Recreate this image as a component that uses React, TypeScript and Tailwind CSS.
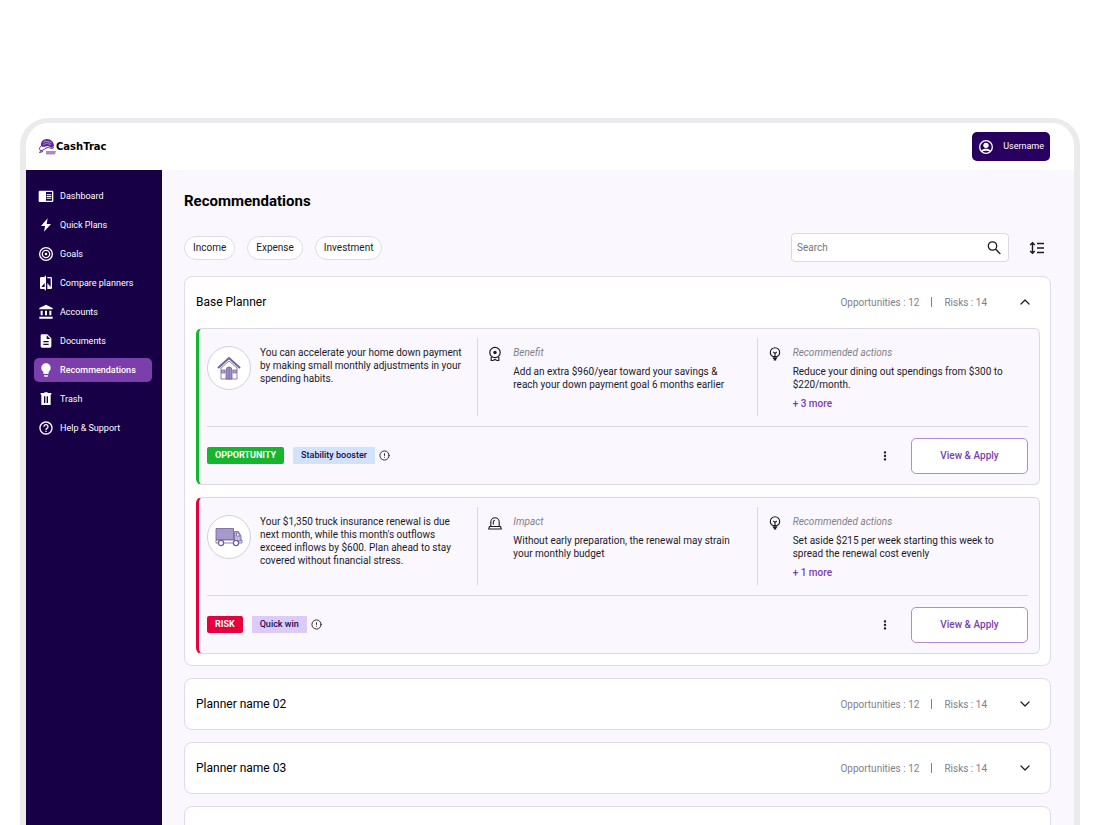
import type { ReactNode } from "react";
import { clsx } from "clsx";
import { ChevronDown, ChevronUp, CircleAlert } from "lucide-react";
import {
  MdAccountBalance,
  MdChromeReaderMode,
  MdCompare,
  MdDescription,
  MdHelpOutline,
  MdLightbulb,
  MdMoreVert,
} from "react-icons/md";

const navItems: { label: string; icon: ReactNode; active?: boolean }[] = [
  { label: "Dashboard", icon: <MdChromeReaderMode /> },
  { label: "Quick Plans", icon: <BoltIcon /> },
  { label: "Goals", icon: <TargetIcon /> },
  { label: "Compare planners", icon: <MdCompare /> },
  { label: "Accounts", icon: <MdAccountBalance /> },
  { label: "Documents", icon: <MdDescription /> },
  { label: "Recommendations", icon: <MdLightbulb />, active: true },
  { label: "Trash", icon: <TrashIcon /> },
  { label: "Help & Support", icon: <MdHelpOutline /> },
];

const filters = ["Income", "Expense", "Investment"];

interface Recommendation {
  kind: "opportunity" | "risk";
  picture: ReactNode;
  summary: string;
  effectIcon: ReactNode;
  effectTitle: string;
  effect: string;
  action: string;
  more: string;
  tag: string;
}

const recommendations: Recommendation[] = [
  {
    kind: "opportunity",
    picture: <HouseIcon />,
    summary:
      "You can accelerate your home down payment by making small monthly adjustments in your spending habits.",
    effectIcon: <AwardIcon />,
    effectTitle: "Benefit",
    effect:
      "Add an extra $960/year toward your savings & reach your down payment goal 6 months earlier",
    action: "Reduce your dining out spendings from $300 to $220/month.",
    more: "+ 3 more",
    tag: "Stability booster",
  },
  {
    kind: "risk",
    picture: <TruckIcon />,
    summary:
      "Your $1,350 truck insurance renewal is due next month, while this month's outflows exceed inflows by $600. Plan ahead to stay covered without financial stress.",
    effectIcon: <SirenIcon />,
    effectTitle: "Impact",
    effect:
      "Without early preparation, the renewal may strain your monthly budget",
    action:
      "Set aside $215 per week starting this week to spread the renewal cost evenly",
    more: "+ 1 more",
    tag: "Quick win",
  },
];

export default function App() {
  return (
    <div className="flex h-screen flex-col bg-white px-5 pt-[118px] font-['Roboto','Liberation_Sans',sans-serif] text-[10px] leading-[13px] text-[#1c1b1f] slashed-zero">
      <div className="flex min-h-0 flex-1 flex-col overflow-hidden rounded-t-[28px] border-x-[6px] border-t-[5px] border-[#ebeaed] bg-[#faf7ff]">
        <Header />
        <div className="flex min-h-0 flex-1">
          <Sidebar />
          <main className="min-w-0 flex-1 overflow-y-auto pr-[23px] pb-6 pl-[22px] [scrollbar-width:none]">
            <h1 className="mt-5 text-[15px] leading-[22px] font-bold text-black">
              Recommendations
            </h1>
            <Toolbar />
            <div className="mt-[14px] flex flex-col gap-3">
              <Planner name="Base Planner" open>
                {recommendations.map((rec) => (
                  <RecommendationCard key={rec.kind} rec={rec} />
                ))}
              </Planner>
              <Planner name="Planner name 02" />
              <Planner name="Planner name 03" />
              <Planner name="Planner name 04" />
            </div>
          </main>
        </div>
      </div>
    </div>
  );
}

function Header() {
  return (
    <header className="flex h-[47px] shrink-0 items-center justify-between bg-white pr-6 pl-3">
      <a href="#" className="flex items-center">
        <Logo />
        <span className="font-['DejaVu_Sans',sans-serif] text-[10px] font-bold text-black">
          CashTrac
        </span>
      </a>
      <button className="flex h-[29px] items-center gap-[9px] rounded-[5px] bg-[#28005f] px-[6px] text-[9px] text-white">
        <UserIcon />
        Username
      </button>
    </header>
  );
}

function Sidebar() {
  return (
    <nav className="flex w-[136px] shrink-0 flex-col gap-[5px] bg-[#180047] pt-[14px] pr-[10px] pl-2">
      {navItems.map(({ label, icon, active }) => (
        <a
          key={label}
          href="#"
          className={clsx(
            "flex h-6 items-center gap-[6px] rounded-[5px] px-1 text-[9px] whitespace-nowrap text-white",
            active && "bg-[#7b3fab] font-medium",
          )}
        >
          <span className="text-base">{icon}</span>
          {label}
        </a>
      ))}
    </nav>
  );
}

function Toolbar() {
  return (
    <div className="mt-[21px] flex items-center justify-between">
      <div className="flex gap-3">
        {filters.map((filter) => (
          <button
            key={filter}
            className="h-6 rounded-full border border-[#dfdbe6] bg-white px-2"
          >
            {filter}
          </button>
        ))}
      </div>
      <div className="flex items-center gap-5 pr-[6px]">
        <label className="flex h-[29px] w-[218px] items-center rounded-[4px] border border-[#dcd9e2] bg-white px-[5px]">
          <input
            type="search"
            aria-label="Search"
            placeholder="Search"
            className="min-w-0 flex-1 outline-none placeholder:text-[#77757c]"
          />
          <SearchIcon />
        </label>
        <button aria-label="Sort">
          <SortIcon />
        </button>
      </div>
    </div>
  );
}

function Planner({
  name,
  open,
  children,
}: {
  name: string;
  open?: boolean;
  children?: ReactNode;
}) {
  const Chevron = open ? ChevronUp : ChevronDown;
  return (
    <section className="rounded-[8px] border border-[#e0dbe8] bg-white pr-[10px] pl-[11px]">
      <div className="flex h-[50px] items-center">
        <h2 className="flex-1 text-[12px] text-black">{name}</h2>
        <div className="flex items-center text-[#828087]">
          <span>Opportunities : 12</span>
          <span className="mx-3 h-[10px] w-px bg-[#828087]" />
          <span>Risks : 14</span>
        </div>
        <button
          aria-label={open ? "Collapse" : "Expand"}
          className="mr-[7px] ml-[30px]"
        >
          <Chevron className="size-4" strokeWidth={1.8} />
        </button>
      </div>
      {children && (
        <div className="flex flex-col gap-3 pt-px pb-[11px]">{children}</div>
      )}
    </section>
  );
}

function RecommendationCard({ rec }: { rec: Recommendation }) {
  const isRisk = rec.kind === "risk";
  return (
    <article
      className={clsx(
        "rounded-[6px] border border-l-[3px] border-[#dcd7e4] bg-[#faf7ff] pr-[11px] pl-2",
        isRisk ? "border-l-[#e6003d]" : "border-l-[#15b52e]",
      )}
    >
      <div className="grid grid-cols-[270fr_279fr_271fr] border-b border-[#dcd7e4] pt-[9px] pb-[10px]">
        <div className="flex min-h-[78px] gap-[9px] pt-2 pr-3">
          <div className="flex size-11 shrink-0 items-center justify-center rounded-full border border-[#d5d1da] bg-white">
            {rec.picture}
          </div>
          <p>{rec.summary}</p>
        </div>
        <Detail icon={rec.effectIcon} title={rec.effectTitle}>
          <p>{rec.effect}</p>
        </Detail>
        <Detail icon={<BulbIcon />} title="Recommended actions">
          <p>{rec.action}</p>
          <button className="mt-[6px] block font-medium text-[#7b3fab]">
            {rec.more}
          </button>
        </Detail>
      </div>
      <div className="flex h-[57px] items-center">
        <span
          className={clsx(
            "rounded-[2px] px-2 py-[2px] text-[9px] font-bold text-white",
            isRisk ? "bg-[#e6003d]" : "bg-[#15b52e]",
          )}
        >
          {rec.kind.toUpperCase()}
        </span>
        <span
          className={clsx(
            "ml-[9px] px-2 py-[2px] text-[9px] font-medium text-[#200a55]",
            isRisk ? "bg-[#dccbf7]" : "bg-[#d2e2f8]",
          )}
        >
          {rec.tag}
        </span>
        <button aria-label="About this tag" className="ml-1">
          <CircleAlert className="size-[11px]" strokeWidth={2} />
        </button>
        <button aria-label="More options" className="mr-[19px] ml-auto">
          <MdMoreVert className="size-[14px]" />
        </button>
        <button className="h-9 w-[117px] rounded-[5px] border border-[#b48bd3] bg-white font-medium text-[#7b3fab]">
          View & Apply
        </button>
      </div>
    </article>
  );
}

function Detail({
  icon,
  title,
  children,
}: {
  icon: ReactNode;
  title: string;
  children: ReactNode;
}) {
  return (
    <div className="flex gap-[11px] border-l border-[#dcd7e4] pt-2 pr-4 pl-[10px]">
      <span className="shrink-0">{icon}</span>
      <div>
        <h3 className="mb-[6px] text-[#828087] italic">{title}</h3>
        {children}
      </div>
    </div>
  );
}

function Logo() {
  return (
    <svg viewBox="0 0 18 17" className="h-[17px] w-[18px]">
      <path d="M3 8C2.500 4 5 1 9 1s7 3 7 7l-2 2-4-2-5 1z" fill="#5b2a91" />
      <path
        d="M5 5c3-2 6-2 9 0M6 3c3 0 5 1 7 4M5 7c3-2 5-2 7 0"
        fill="none"
        stroke="#b79ad6"
        strokeWidth=".7"
      />
      <path
        d="M3 8c-2 2-2 4 0 4.500 3 .5 4-3 7-3 2 0 3 2 6 0M3 12.500l-1.500 2L5 13.500"
        fill="none"
        stroke="#5b2a91"
        strokeWidth="1"
      />
      <path d="M8 13h10l-1 3.500H8z" fill="#a98bc8" />
    </svg>
  );
}

function UserIcon() {
  return (
    <svg viewBox="0 0 24 24" className="size-4" fill="currentColor">
      <circle cx="12" cy="12" r="9.5" fill="none" stroke="currentColor" strokeWidth="2" />
      <circle cx="12" cy="9.500" r="4" />
      <path d="M4.500 18c2-3 4.500-3.500 7.500-3.500s5.500.5 7.500 3.500l-1 1.500c-4-2.500-9-2.500-13 0z" />
    </svg>
  );
}

function BoltIcon() {
  return (
    <svg viewBox="0 0 24 24" className="size-4" fill="currentColor">
      <path d="M14.500 2 4.500 13.500h6L9 22 19.500 10.500h-6.500z" />
    </svg>
  );
}

function TargetIcon() {
  return (
    <svg viewBox="0 0 24 24" className="size-4" fill="none" stroke="currentColor" strokeWidth="2">
      <circle cx="12" cy="12" r="9.5" />
      <circle cx="12" cy="12" r="5.5" />
      <circle cx="12" cy="12" r="2" fill="currentColor" stroke="none" />
    </svg>
  );
}

function TrashIcon() {
  return (
    <svg viewBox="0 0 24 24" className="size-4" fill="currentColor">
      <path
        fillRule="evenodd"
        d="M4 3h5l1-1h4l1 1h5v2.500h-1V21H5V5.500H4zM9 8v10h2V8zm4 0v10h2V8z"
      />
    </svg>
  );
}

function SearchIcon() {
  return (
    <svg viewBox="0 0 18 18" className="size-[18px]" fill="none" stroke="currentColor" strokeWidth="1.3">
      <circle cx="7.500" cy="7" r="4.200" />
      <path d="m10.500 10 4.800 5" />
    </svg>
  );
}

function SortIcon() {
  return (
    <svg viewBox="0 0 16 14" className="h-[14px] w-4" fill="none" stroke="currentColor" strokeWidth="1.4">
      <path d="M3.500 2v10M1.200 4l2.300-2.300L5.800 4M1.200 10l2.300 2.300L5.800 10M8 2.500h7M8 7h7M8 11.500h7" />
    </svg>
  );
}

function AwardIcon() {
  return (
    <svg viewBox="0 0 14 16" className="h-4 w-[14px]" fill="none" stroke="currentColor" strokeWidth="1.2">
      <circle cx="7" cy="6.500" r="5.200" />
      <circle cx="7" cy="6.500" r="1.700" fill="currentColor" stroke="none" />
      <path d="M3.200 11v3.500H5l2-1 2 1h1.800V11" />
    </svg>
  );
}

function SirenIcon() {
  return (
    <svg viewBox="0 0 14 16" className="h-4 w-[14px]" fill="none" stroke="currentColor" strokeWidth="1.1" strokeLinejoin="round">
      <path d="M2.800 11.500V7a4.200 4.200 0 0 1 8.400 0v4.500M5.300 9.500V7A1.800 1.800 0 0 1 7 5.200" />
      <path d="M1.500 11.500h11l.8 2.500H.7z" />
    </svg>
  );
}

function BulbIcon() {
  return (
    <svg viewBox="0 0 14 16" className="h-4 w-[14px]" fill="none" stroke="currentColor" strokeWidth="1.1">
      <path d="M5 10.500C3.300 9.700 2.300 8.200 2.300 6.500a4.700 4.700 0 0 1 9.400 0c0 1.700-1 3.200-2.700 4zM5.300 6l1.700 1.500L8.700 6M7 7.500v3" />
      <path d="M4.800 12h4.400M5.800 13.700h2.400" strokeWidth="1.700" />
    </svg>
  );
}

function HouseIcon() {
  return (
    <svg viewBox="0 0 26 26" className="size-[26px]">
      <path d="M5 13v11h16V13l-8-7z" fill="#fff" stroke="#8d80b3" />
      <path d="M2 13 13 3l11 10" fill="none" stroke="#6f6199" strokeWidth="2" />
      <path d="M10 24v-9a3 3 0 0 1 6 0v9z" fill="#9c8fc4" stroke="#6f6199" strokeWidth=".8" />
      <path d="M13 12v12" stroke="#6f6199" strokeWidth=".6" />
      <path d="M5.500 15H9v3H5.500zM17 15h3.500v3H17z" fill="#b3a7d6" stroke="#6f6199" strokeWidth=".7" />
    </svg>
  );
}

function TruckIcon() {
  return (
    <svg viewBox="0 0 28 20" className="h-5 w-7" stroke="#6f6199" strokeWidth=".8">
      <path d="M1 1.500h17.500V13H1z" fill="#a79acb" />
      <path d="M1 13h26v3H1z" fill="#fff" />
      <path d="M19.500 4.500h4L26 9v5h-6.500z" fill="#c2b8df" />
      <path d="M21.500 6h2l1.500 3h-3.500z" fill="#fff" />
      <circle cx="6" cy="16" r="2.600" fill="#fff" strokeWidth="1.3" />
      <circle cx="21" cy="16" r="2.600" fill="#fff" strokeWidth="1.3" />
    </svg>
  );
}
